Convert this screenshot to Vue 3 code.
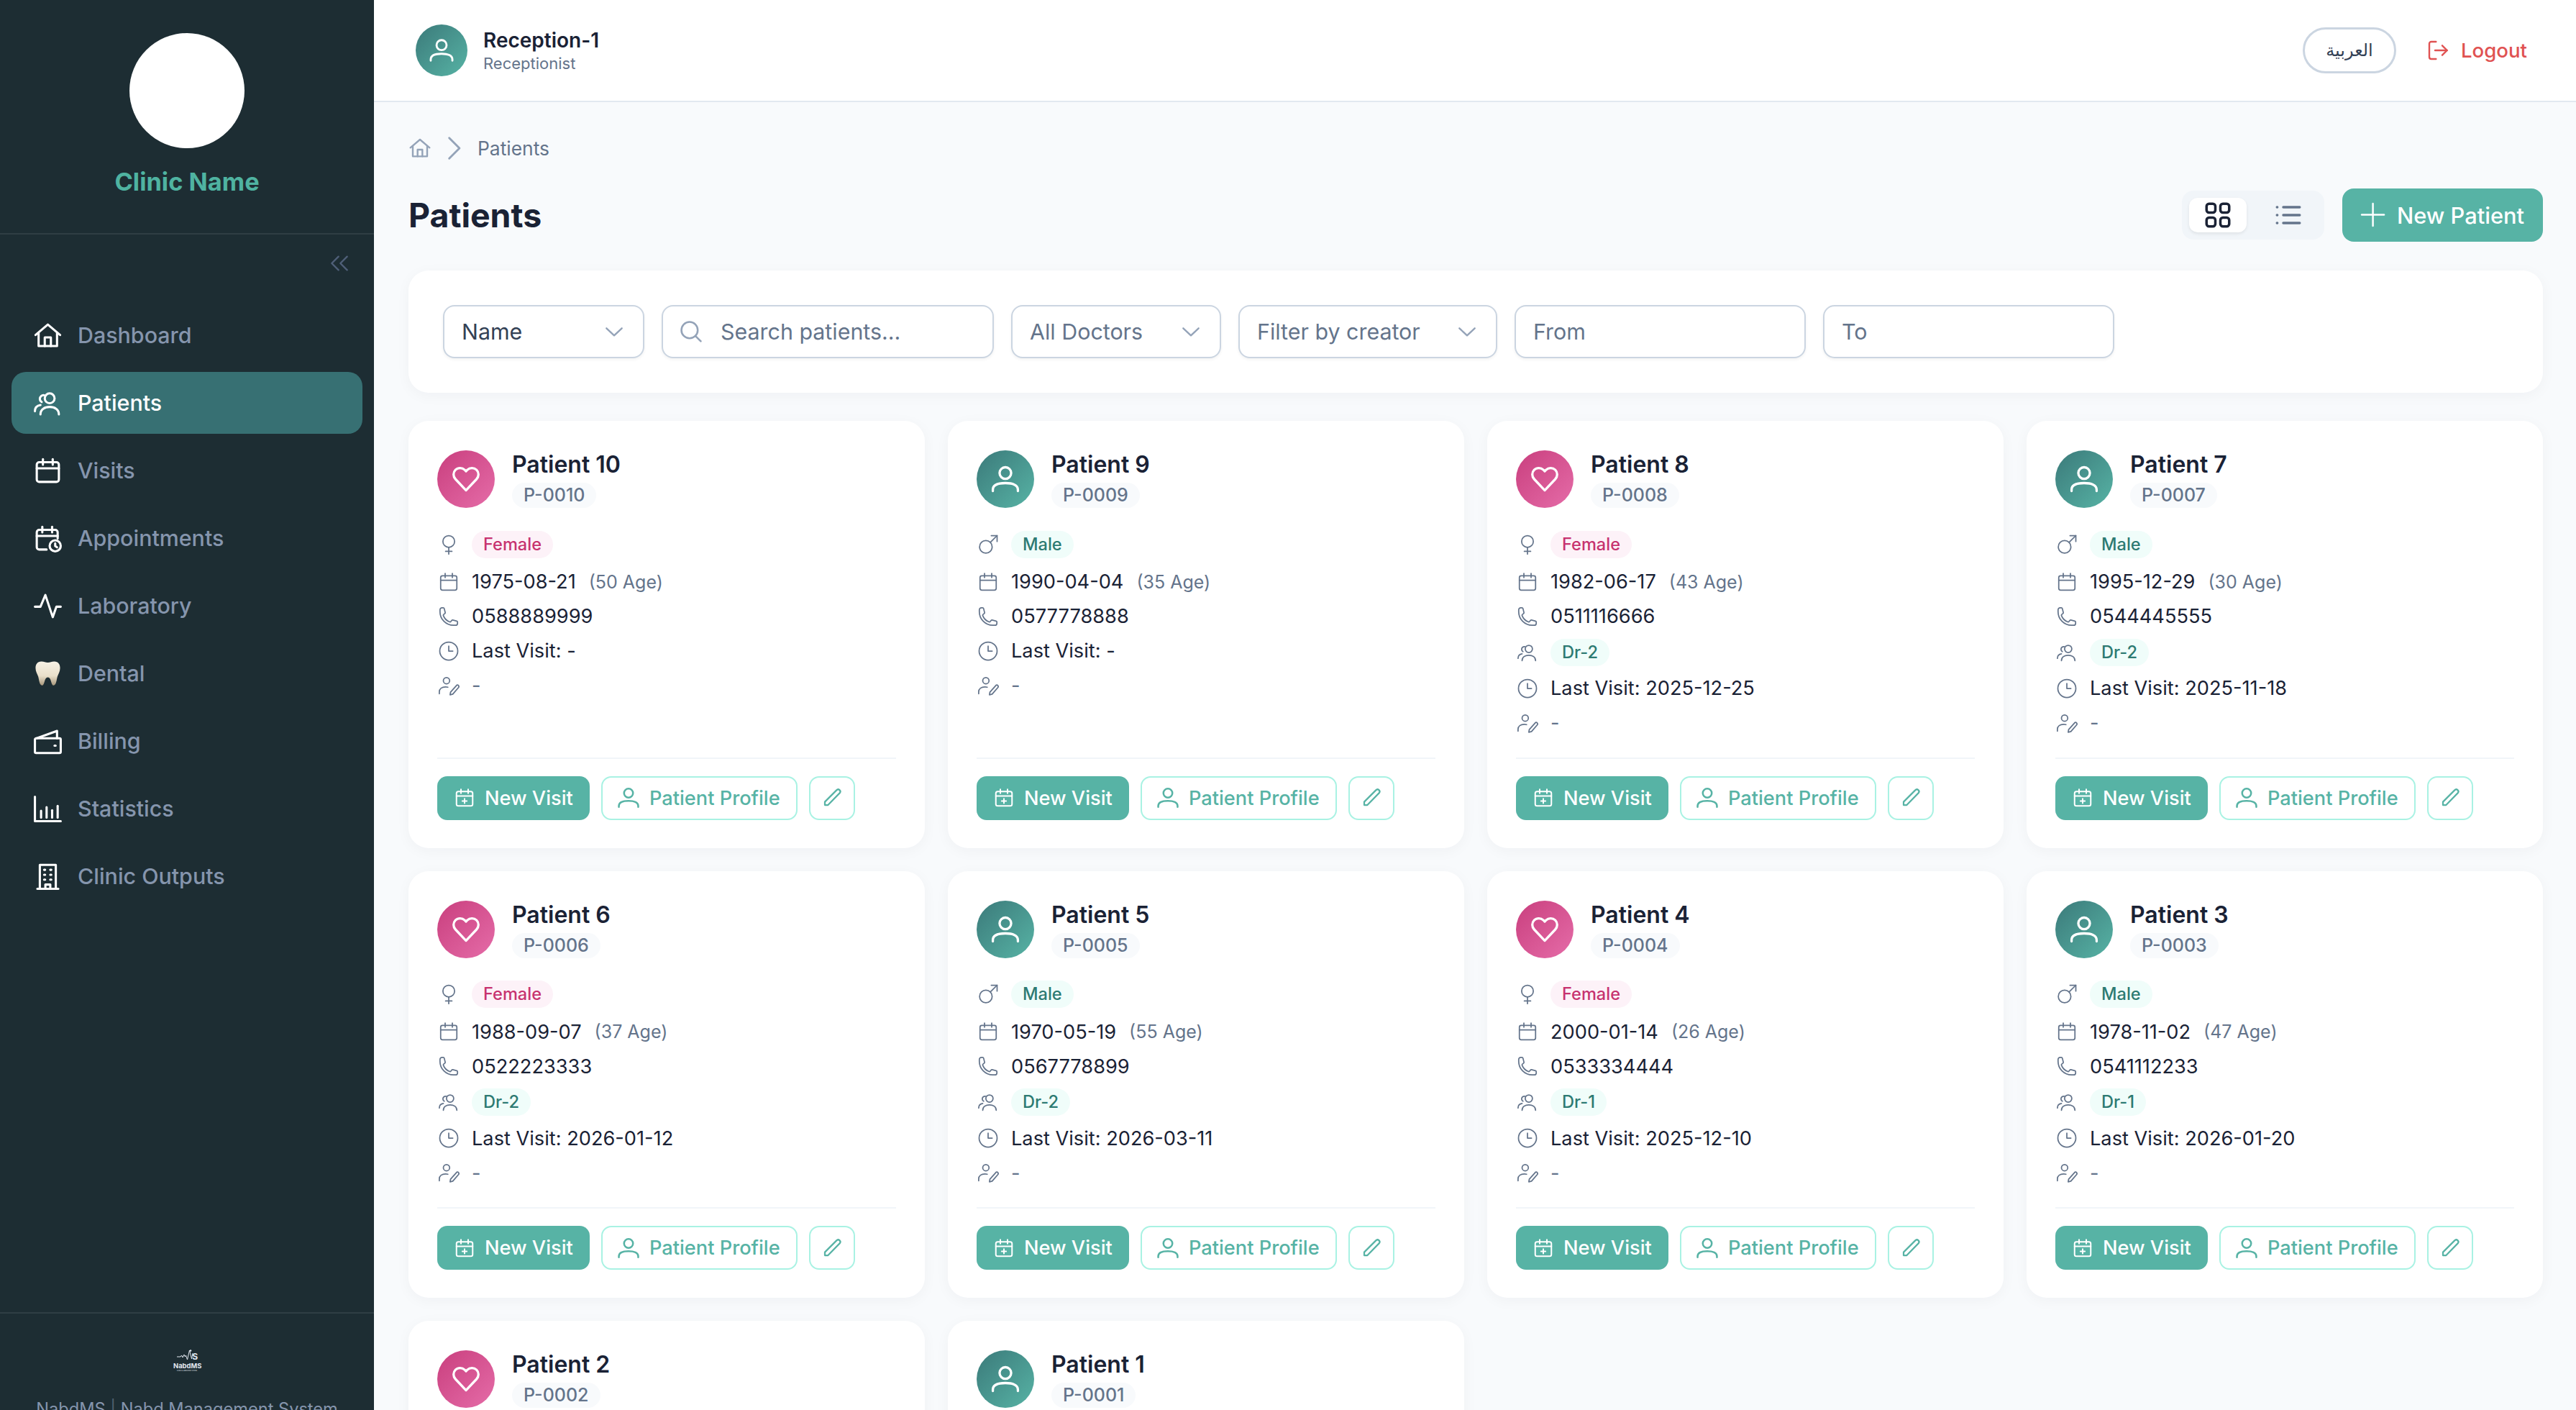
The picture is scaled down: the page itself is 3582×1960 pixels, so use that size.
<script setup>
import { h } from "vue";

const icons = {
  home: ["M2 11.5 12 3l10 8.5", "M4.5 10v10.5h15V10", "M9.5 20.5v-7h5v7"],
  users: [
    "M13.5 4a4 4 0 1 0 0 8 4 4 0 0 0 0-8z",
    "M6 21c0-4 3.5-6 7.5-6s7.5 2 7.5 6",
    "M9 5.5a3 3 0 0 0-3.5 3 3 3 0 0 0 1.5 2.5",
    "M1.5 18.5c0-2.5 1.5-4.5 4.5-5"
  ],
  calendar: ["M5 5h14a2 2 0 0 1 2 2v12a2 2 0 0 1-2 2H5a2 2 0 0 1-2-2V7a2 2 0 0 1 2-2z", "M3 10h18", "M8 2.5V7", "M16 2.5V7"],
  appointments: [
    "M11 21H5a2 2 0 0 1-2-2V7a2 2 0 0 1 2-2h13a2 2 0 0 1 2 2v5",
    "M3 10h17",
    "M7.5 2.5V7",
    "M15.5 2.5V7",
    "M18 13.5a4.5 4.5 0 1 0 0 9 4.5 4.5 0 0 0 0-9z",
    "M18 16v2.2l1.5 1"
  ],
  pulse: ["M1.5 12.5H6L10 3l6 18 3-8.5h3.5"],
  wallet: [
    "M2.5 9.5h19a1 1 0 0 1 1 1v10a1 1 0 0 1-1 1h-19a1 1 0 0 1-1-1v-10a1 1 0 0 1 1-1z",
    "M3 9.5 19.5 3.5v6",
    "M17.5 15.5h.8"
  ],
  stats: ["M1.5 2v20h21", "M6.5 13.5V19", "M11 10.5V19", "M15.5 13V19", "M20 9.5V19"],
  building: [
    "M5.5 22V2.5h13V22",
    "M3.5 22h17",
    "M9 6.5h.8", "M14 6.5h.8", "M9 10.5h.8", "M14 10.5h.8", "M9 14.5h.8", "M14 14.5h.8",
    "M10 22v-3.5h4V22"
  ],
  user: ["M12 3a4.4 4.4 0 1 0 0 8.800 4.4 4.400 0 0 0 0-8.800z", "M2.5 21v-1c0-3.500 4-5 9.500-5s9.500 1.500 9.500 5v1"],
  heart: ["M12 20.5 4 12a5 5 0 0 1 0-7 5 5 0 0 1 7 0l1 1 1-1a5 5 0 0 1 7 0 5 5 0 0 1 0 7z"],
  female: ["M12 2a6.5 6.5 0 1 0 0 13 6.5 6.5 0 0 0 0-13z", "M12 15v7.5", "M8.5 19.5h7"],
  male: ["M9.5 7.5a7 7 0 1 0 0 14 7 7 0 0 0 0-14z", "M14.5 9.5 22 2", "M15.5 2H22v6.5"],
  phone: [
    "M2.25 6.75c0 8.284 6.716 15 15 15h2.25a2.25 2.25 0 0 0 2.25-2.25v-1.372c0-.516-.351-.966-.852-1.091l-4.423-1.106c-.44-.11-.902.055-1.173.417l-.97 1.293c-.282.376-.769.542-1.21.38a12.035 12.035 0 0 1-7.143-7.143c-.162-.441.004-.928.38-1.21l1.293-.97c.363-.271.527-.734.417-1.173L6.963 3.102a1.125 1.125 0 0 0-1.091-.852H4.5A2.25 2.25 0 0 0 2.25 4.5z"
  ],
  clock: ["M12 2a10 10 0 1 0 0 20 10 10 0 0 0 0-20z", "M12 6.5V12h4.5"],
  creator: [
    "M9.5 3a3.5 3.5 0 1 0 0 7 3.5 3.5 0 0 0 0-7z",
    "M1.5 21v-2c0-3.5 3-5.5 7-5.5 1 0 1.5.1 2.5.3",
    "M21 11.5a1.7 1.7 0 0 1 2 2.5l-6.5 7.5-3 .8.5-3z"
  ],
  search: ["M10.5 2.5a8 8 0 1 0 0 16 8 8 0 0 0 0-16z", "M16.5 16.5 21.5 21.5"],
  chevron: ["M4 8.5 12 16l8-7.5"],
  chevronRight: ["M8 3l9 9-9 9"],
  collapse: ["M11 5l-7 7 7 7", "M20 5l-7 7 7 7"],
  logout: ["M10 3H5a2 2 0 0 0-2 2v14a2 2 0 0 0 2 2h5", "M9 12h12.5", "M16.5 7l5 5-5 5"],
  grid: [
    "M5 3h3a2 2 0 0 1 2 2v3a2 2 0 0 1-2 2H5a2 2 0 0 1-2-2V5a2 2 0 0 1 2-2z",
    "M16 3h3a2 2 0 0 1 2 2v3a2 2 0 0 1-2 2h-3a2 2 0 0 1-2-2V5a2 2 0 0 1 2-2z",
    "M5 14h3a2 2 0 0 1 2 2v3a2 2 0 0 1-2 2H5a2 2 0 0 1-2-2v-3a2 2 0 0 1 2-2z",
    "M16 14h3a2 2 0 0 1 2 2v3a2 2 0 0 1-2 2h-3a2 2 0 0 1-2-2v-3a2 2 0 0 1 2-2z"
  ],
  list: ["M8 5.7h13", "M8 12h13", "M8 18.3h13", "M3 5.7h.2", "M3 12h.2", "M3 18.3h.2"],
  plus: ["M12 2v20", "M2 12h20"],
  newVisit: ["M5 5h14a2 2 0 0 1 2 2v12a2 2 0 0 1-2 2H5a2 2 0 0 1-2-2V7a2 2 0 0 1 2-2z", "M3 10h18", "M8 2.5V7", "M16 2.5V7", "M12 13v5", "M9.5 15.5h5"],
  pencil: ["M17 3.5a2.3 2.3 0 0 1 3.5 3.2L7.5 20H4v-3.5z"]
};

const Icon = (props) =>
  h(
    "svg",
    {
      viewBox: "0 0 24 24",
      fill: "none",
      stroke: "currentColor",
      "stroke-width": props.sw || 1.8,
      "stroke-linecap": "round",
      "stroke-linejoin": "round"
    },
    icons[props.name].map((d) => h("path", { d }))
  );
Icon.props = ["name", "sw"];

const navItems = [
  { label: "Dashboard", icon: "home" },
  { label: "Patients", icon: "users", active: true },
  { label: "Visits", icon: "calendar" },
  { label: "Appointments", icon: "appointments" },
  { label: "Laboratory", icon: "pulse" },
  { label: "Dental", icon: "tooth" },
  { label: "Billing", icon: "wallet" },
  { label: "Statistics", icon: "stats" },
  { label: "Clinic Outputs", icon: "building" }
];

const patients = [
  { name: "Patient 10", id: "P-0010", gender: "Female", dob: "1975-08-21", age: 50, phone: "0588889999", visit: "-" },
  { name: "Patient 9", id: "P-0009", gender: "Male", dob: "1990-04-04", age: 35, phone: "0577778888", visit: "-" },
  { name: "Patient 8", id: "P-0008", gender: "Female", dob: "1982-06-17", age: 43, phone: "0511116666", doctor: "Dr-2", visit: "2025-12-25" },
  { name: "Patient 7", id: "P-0007", gender: "Male", dob: "1995-12-29", age: 30, phone: "0544445555", doctor: "Dr-2", visit: "2025-11-18" },
  { name: "Patient 6", id: "P-0006", gender: "Female", dob: "1988-09-07", age: 37, phone: "0522223333", doctor: "Dr-2", visit: "2026-01-12" },
  { name: "Patient 5", id: "P-0005", gender: "Male", dob: "1970-05-19", age: 55, phone: "0567778899", doctor: "Dr-2", visit: "2026-03-11" },
  { name: "Patient 4", id: "P-0004", gender: "Female", dob: "2000-01-14", age: 26, phone: "0533334444", doctor: "Dr-1", visit: "2025-12-10" },
  { name: "Patient 3", id: "P-0003", gender: "Male", dob: "1978-11-02", age: 47, phone: "0541112233", doctor: "Dr-1", visit: "2026-01-20" },
  { name: "Patient 2", id: "P-0002", gender: "Female", dob: "-", age: "-", phone: "-", visit: "-" },
  { name: "Patient 1", id: "P-0001", gender: "Male", dob: "-", age: "-", phone: "-", visit: "-" }
];
</script>

<template>
  <div class="shell">
    <aside class="sidebar">
      <div class="brand">
        <div class="brand-logo"></div>
        <div class="brand-name">Clinic Name</div>
      </div>
      <div class="collapse-row">
        <Icon class="collapse-icon" name="collapse" />
      </div>
      <nav class="nav">
        <a v-for="item in navItems" :key="item.label" class="nav-item" :class="{ active: item.active }">
          <svg v-if="item.icon === 'tooth'" class="nav-icon tooth" viewBox="0 0 24 24">
            <defs>
              <linearGradient id="toothFill" x1="0" y1="0" x2="0" y2="1">
                <stop offset="0" stop-color="#f7f2e6" />
                <stop offset="0.6" stop-color="#e9dfca" />
                <stop offset="1" stop-color="#a8977c" />
              </linearGradient>
            </defs>
            <path
              fill="url(#toothFill)"
              d="M6.5 1.5C3 1.5 1.5 4 1.5 7c0 3 1.5 5 2.3 7.5.7 2.5 1 7.500 3.200 7.500 2.600 0 1.700-7 5-7s2.400 7 5 7c2.200 0 2.500-5 3.200-7.500C21 12 22.500 10 22.500 7c0-3-1.500-5.500-5-5.500-2.300 0-3.500 1-5.500 1s-3.200-1-5.500-1z"
            />
          </svg>
          <Icon v-else class="nav-icon" :name="item.icon" />
          <span>{{ item.label }}</span>
        </a>
      </nav>
      <div class="sidebar-footer">
        <div class="mini-logo">
          <svg class="mini-pulse" viewBox="0 0 30 16" fill="none" stroke="#e2e8f0" stroke-width="1">
            <path d="M1 10h5l1.5-2 1.5 3 2-4 1.500 3 1-2 2 6 3-13 3 12 1.500-8" />
            <circle cx="20" cy="1.5" r="1.3" fill="#e2e8f0" stroke="none" />
          </svg>
          <span class="mini-s">S</span>
          <div class="mini-name">NabdMS</div>
          <div class="mini-sub">CLINIC &amp; LABORATORY SYSTEM</div>
        </div>
        <div class="footer-text">NabdMS <span class="bar">|</span> Nabd Management System</div>
      </div>
    </aside>

    <div class="main">
      <header class="topbar">
        <div class="user">
          <div class="avatar male small"><Icon class="avatar-icon" name="user" /></div>
          <div>
            <div class="user-name">Reception-1</div>
            <div class="user-role">Receptionist</div>
          </div>
        </div>
        <div class="top-actions">
          <button class="lang">العربية</button>
          <button class="logout"><Icon class="logout-icon" name="logout" /> Logout</button>
        </div>
      </header>

      <main class="content">
        <div class="breadcrumb">
          <Icon class="crumb-home" name="home" />
          <Icon class="crumb-sep" name="chevronRight" />
          <span>Patients</span>
        </div>

        <div class="page-head">
          <h1>Patients</h1>
          <div class="page-actions">
            <div class="view-toggle">
              <button class="view-btn on"><Icon name="grid" :sw="2" /></button>
              <button class="view-btn"><Icon name="list" :sw="2" /></button>
            </div>
            <button class="new-patient"><Icon class="plus" name="plus" :sw="1.6" /> New Patient</button>
          </div>
        </div>

        <section class="filters">
          <div class="field select w-name dark">Name <Icon class="chev" name="chevron" /></div>
          <label class="field w-search">
            <Icon class="search-icon" name="search" />
            <input placeholder="Search patients..." />
          </label>
          <div class="field select w-doctors">All Doctors <Icon class="chev" name="chevron" /></div>
          <div class="field select w-creator">Filter by creator <Icon class="chev" name="chevron" /></div>
          <label class="field w-date"><input placeholder="From" /></label>
          <label class="field w-date"><input placeholder="To" /></label>
        </section>

        <section class="cards">
          <article v-for="p in patients" :key="p.id" class="card">
            <div class="card-head">
              <div class="avatar" :class="p.gender === 'Female' ? 'female' : 'male'">
                <Icon class="avatar-icon" :name="p.gender === 'Female' ? 'heart' : 'user'" />
              </div>
              <div>
                <div class="card-name">{{ p.name }}</div>
                <span class="card-id">{{ p.id }}</span>
              </div>
            </div>

            <div class="rows">
              <div class="row gender-row">
                <Icon class="row-icon" :name="p.gender === 'Female' ? 'female' : 'male'" :sw="1.4" />
                <span class="chip" :class="p.gender === 'Female' ? 'chip-f' : 'chip-m'">{{ p.gender }}</span>
              </div>
              <div class="row">
                <Icon class="row-icon" name="calendar" :sw="1.4" />
                <span>{{ p.dob }}</span>
                <span class="age">({{ p.age }} Age)</span>
              </div>
              <div class="row">
                <Icon class="row-icon" name="phone" :sw="1.4" />
                <span>{{ p.phone }}</span>
              </div>
              <div v-if="p.doctor" class="row doctor-row">
                <Icon class="row-icon" name="users" :sw="1.4" />
                <span class="chip chip-m">{{ p.doctor }}</span>
              </div>
              <div class="row">
                <Icon class="row-icon" name="clock" :sw="1.4" />
                <span>Last Visit: {{ p.visit }}</span>
              </div>
              <div class="row">
                <Icon class="row-icon" name="creator" :sw="1.4" />
                <span class="muted">-</span>
              </div>
            </div>

            <div class="card-actions">
              <button class="btn primary"><Icon class="btn-icon" name="newVisit" :sw="1.6" /> New Visit</button>
              <button class="btn outline"><Icon class="btn-icon user-btn" name="user" :sw="1.8" /> Patient Profile</button>
              <button class="btn outline edit"><Icon class="btn-icon" name="pencil" :sw="1.8" /></button>
            </div>
          </article>
        </section>
      </main>
    </div>
  </div>
</template>

<style>
html,
body {
  margin: 0;
  overflow: hidden;
  background: #f8fafc;
}
</style>

<style scoped>
.shell {
  zoom: 2;
  display: flex;
  width: 1791px;
  height: 980px;
  overflow: hidden;
  background: #f8fafc;
  font-family: Inter, "Noto Sans", sans-serif;
  color: #1a2235;
}

button {
  font-family: inherit;
  cursor: pointer;
}

/* sidebar */
.sidebar {
  flex: 0 0 260px;
  height: 1000px;
  display: flex;
  flex-direction: column;
  background: #1d2d33;
}

.brand {
  height: 139px;
  padding-top: 23px;
  border-bottom: 1px solid #2f3e44;
  text-align: center;
}

.brand-logo {
  width: 80px;
  height: 80px;
  margin: 0 auto;
  border-radius: 50%;
  background: #fff;
}

.brand-name {
  margin-top: 12px;
  font-size: 17.2px;
  line-height: 23px;
  font-weight: 700;
  color: #4fb3a1;
}

.collapse-row {
  display: flex;
  justify-content: flex-end;
  padding: 12px 16px 0 0;
}

.collapse-icon {
  width: 16px;
  height: 16px;
  color: #4f5f78;
}

.nav {
  flex: 1;
  display: flex;
  flex-direction: column;
  gap: 4px;
  padding: 20.5px 8px 0;
}

.nav-item {
  display: flex;
  align-items: center;
  gap: 12px;
  height: 43px;
  padding-left: 16px;
  border-radius: 10px;
  font-size: 15.2px;
  font-weight: 500;
  color: #8595ad;
}

.nav-item.active {
  background: #377073;
  color: #fff;
}

.nav-icon {
  flex: none;
  width: 20.5px;
  height: 20.5px;
  margin: 0 -1.25px;
  color: #fff;
}

.nav-icon.tooth {
  width: 19.5px;
  height: 19.5px;
  margin: 0 -0.75px;
}

.sidebar-footer {
  height: 88px;
  box-sizing: border-box;
  border-top: 1px solid #2f3e44;
  padding-top: 25px;
  text-align: center;
}

.mini-logo {
  position: relative;
  width: 19px;
  height: 15px;
  margin: 0 auto;
  color: #e2e8f0;
}

.mini-pulse {
  display: block;
  width: 15px;
  height: 8px;
  margin-left: 2px;
}

.mini-s {
  position: absolute;
  top: 2px;
  right: 2px;
  font-size: 6px;
  line-height: 6px;
  font-weight: 700;
}

.mini-name {
  margin-top: 1.5px;
  font-size: 4.7px;
  line-height: 3.5px;
  font-weight: 700;
}

.mini-sub {
  margin-top: 1px;
  font-size: 0.9px;
  line-height: 1px;
  white-space: nowrap;
}

.footer-text {
  margin-top: 17.5px;
  font-size: 11.8px;
  line-height: 18px;
  color: #8595ad;
  white-space: nowrap;
}

.bar {
  opacity: 0.5;
}

/* top bar */
.main {
  flex: 1;
  min-width: 0;
}

.topbar {
  height: 71px;
  box-sizing: border-box;
  display: flex;
  align-items: center;
  justify-content: space-between;
  padding: 0 18px 0 29px;
  background: #fff;
  border-bottom: 1px solid #e2e8f0;
}

.user {
  display: flex;
  align-items: center;
  gap: 11px;
}

.user-name {
  font-size: 14px;
  line-height: 18px;
  font-weight: 600;
}

.user-role {
  font-size: 11px;
  line-height: 14px;
  color: #64748b;
}

.top-actions {
  display: flex;
  align-items: center;
  gap: 21px;
}

.lang {
  width: 65px;
  height: 32px;
  border: 1.5px solid #cbd5e1;
  border-radius: 16px;
  background: #fff;
  font-family: "DejaVu Sans", sans-serif;
  font-size: 12px;
  color: #334155;
}

.logout {
  display: flex;
  align-items: center;
  gap: 8px;
  padding: 0 16px 0 0;
  border: 0;
  background: none;
  font-size: 13.8px;
  font-weight: 500;
  color: #e05252;
}

.logout-icon {
  width: 16px;
  height: 16px;
}

/* page */
.content {
  padding: 22px 23px 0 24px;
}

.breadcrumb {
  display: flex;
  align-items: center;
  height: 20px;
  font-size: 13.2px;
  color: #64748b;
}

.crumb-home {
  width: 16px;
  height: 16px;
  color: #94a3b8;
}

.crumb-sep {
  width: 19px;
  height: 19px;
  margin: 0 7px 0 6px;
  color: #94a3b8;
}

.page-head {
  display: flex;
  align-items: center;
  justify-content: space-between;
  margin-top: 18px;
  height: 37px;
}

h1 {
  margin: 0;
  font-size: 23.2px;
  font-weight: 700;
  color: #1a2235;
}

.page-actions {
  display: flex;
  align-items: center;
  gap: 12.5px;
}

.view-toggle {
  display: flex;
  gap: 9px;
  padding: 5px;
  border-radius: 8px;
  background: #f1f5f9;
}

.view-btn {
  display: flex;
  align-items: center;
  justify-content: center;
  width: 40px;
  height: 24px;
  padding: 0;
  border: 0;
  border-radius: 6px;
  background: none;
  color: #64748b;
}

.view-btn svg {
  width: 21px;
  height: 21px;
}

.view-btn.on {
  background: #fff;
  color: #1a2235;
  box-shadow: 0 1px 2px rgba(0, 0, 0, 0.08);
}

.new-patient {
  display: flex;
  align-items: center;
  gap: 7.4px;
  height: 37px;
  width: 139.5px;
  padding: 0 0 0 12px;
  border: 0;
  border-radius: 8px;
  background: #57b3a5;
  color: #fff;
  font-size: 15.4px;
  font-weight: 500;
  white-space: nowrap;
}

.plus {
  flex: none;
  width: 18.6px;
  height: 18.6px;
}

/* filters */
.filters {
  display: flex;
  gap: 12px;
  margin-top: 20px;
  height: 85px;
  box-sizing: border-box;
  padding: 24px;
  border-radius: 14px;
  background: #fff;
  box-shadow: 0 2px 10px rgba(15, 23, 42, 0.04);
}

.field {
  display: flex;
  align-items: center;
  box-sizing: border-box;
  height: 37px;
  padding: 0 12px;
  border: 1px solid #cbd5e1;
  border-radius: 8px;
  background: #fff;
  font-size: 15.2px;
  color: #64748b;
  box-shadow: 0 1px 2px rgba(0, 0, 0, 0.05);
}

.field.dark {
  color: #334155;
}

.select {
  justify-content: space-between;
}

.chev {
  width: 16px;
  height: 16px;
  color: #94a3b8;
}

.w-name { width: 140px; }
.w-search { width: 231px; padding-left: 11px; }
.w-doctors { width: 146px; }
.w-creator { width: 180px; }
.w-date { width: 202.5px; }

.search-icon {
  flex: none;
  width: 17px;
  height: 17px;
  margin-right: 12px;
  color: #94a3b8;
}

input {
  flex: 1;
  min-width: 0;
  padding: 0;
  border: 0;
  outline: 0;
  background: none;
  font-family: inherit;
  font-size: 15.2px;
}

input::placeholder {
  color: #64748b;
  opacity: 1;
}

/* cards */
.cards {
  display: grid;
  grid-template-columns: repeat(4, 359px);
  gap: 16px;
  margin-top: 19.5px;
}

.card {
  display: flex;
  flex-direction: column;
  box-sizing: border-box;
  height: 296.75px;
  padding: 20.5px 20px 19.5px;
  border-radius: 14px;
  background: #fff;
  box-shadow: 0 2px 10px rgba(15, 23, 42, 0.04);
}

.card-head {
  display: flex;
  align-items: center;
  gap: 12px;
}

.avatar {
  flex: none;
  display: flex;
  align-items: center;
  justify-content: center;
  width: 40px;
  height: 40px;
  border-radius: 50%;
  color: #fff;
}

.avatar.small {
  width: 36px;
  height: 36px;
}

.avatar.male {
  background: linear-gradient(135deg, #3b7a7a, #57b3a5);
}

.avatar.female {
  background: linear-gradient(135deg, #c93f7e, #e56ca8);
}

.avatar-icon {
  width: 22px;
  height: 22px;
}

.avatar.small .avatar-icon {
  width: 19px;
  height: 19px;
}

.card-name {
  font-size: 16px;
  line-height: 20px;
  font-weight: 600;
  color: #1a2235;
}

.card-id {
  display: inline-block;
  margin-top: 2px;
  padding: 0 8px;
  border-radius: 9px;
  background: #f8fafc;
  font-size: 12.5px;
  line-height: 17.5px;
  font-weight: 500;
  color: #64748b;
}

.rows {
  display: flex;
  flex-direction: column;
  gap: 4.5px;
  margin-top: 13.5px;
  font-size: 13.6px;
  color: #1a2235;
}

.row {
  display: flex;
  align-items: center;
  height: 19.5px;
}

.gender-row {
  height: 23.5px;
}

.doctor-row {
  height: 21.5px;
}

.row-icon {
  flex: none;
  width: 15px;
  height: 15px;
  margin: 0 8.5px 0 0.5px;
  color: #64748b;
}

.chip {
  padding: 0 8px;
  border-radius: 10px;
  font-size: 11.8px;
  line-height: 19px;
  font-weight: 500;
}

.chip-f {
  background: #fdf2f8;
  color: #c7336f;
}

.chip-m {
  background: #f0fdfa;
  color: #2d7a72;
}

.age {
  margin-left: 9px;
  font-size: 12.5px;
  color: #64748b;
}

.muted {
  color: #64748b;
}

.card-actions {
  display: flex;
  gap: 8px;
  margin-top: auto;
  padding-top: 12px;
  border-top: 1px solid #f1f5f9;
}

.btn {
  display: flex;
  align-items: center;
  gap: 6.5px;
  box-sizing: border-box;
  height: 30.5px;
  padding: 0 9.5px;
  border-radius: 7px;
  font-size: 13.6px;
  font-weight: 500;
  white-space: nowrap;
}

.primary {
  width: 106px;
  padding-left: 11.5px;
  border: 0;
  background: #57b3a5;
  color: #fff;
}

.outline {
  width: 136.5px;
  border: 1px solid #a9f2e3;
  background: #fff;
  color: #57b3a5;
}

.edit {
  width: 32px;
  justify-content: center;
  padding: 0;
}

.btn-icon {
  flex: none;
  width: 15px;
  height: 15px;
}

.user-btn {
  width: 17px;
  height: 17px;
  margin-right: -0.5px;
}
</style>
